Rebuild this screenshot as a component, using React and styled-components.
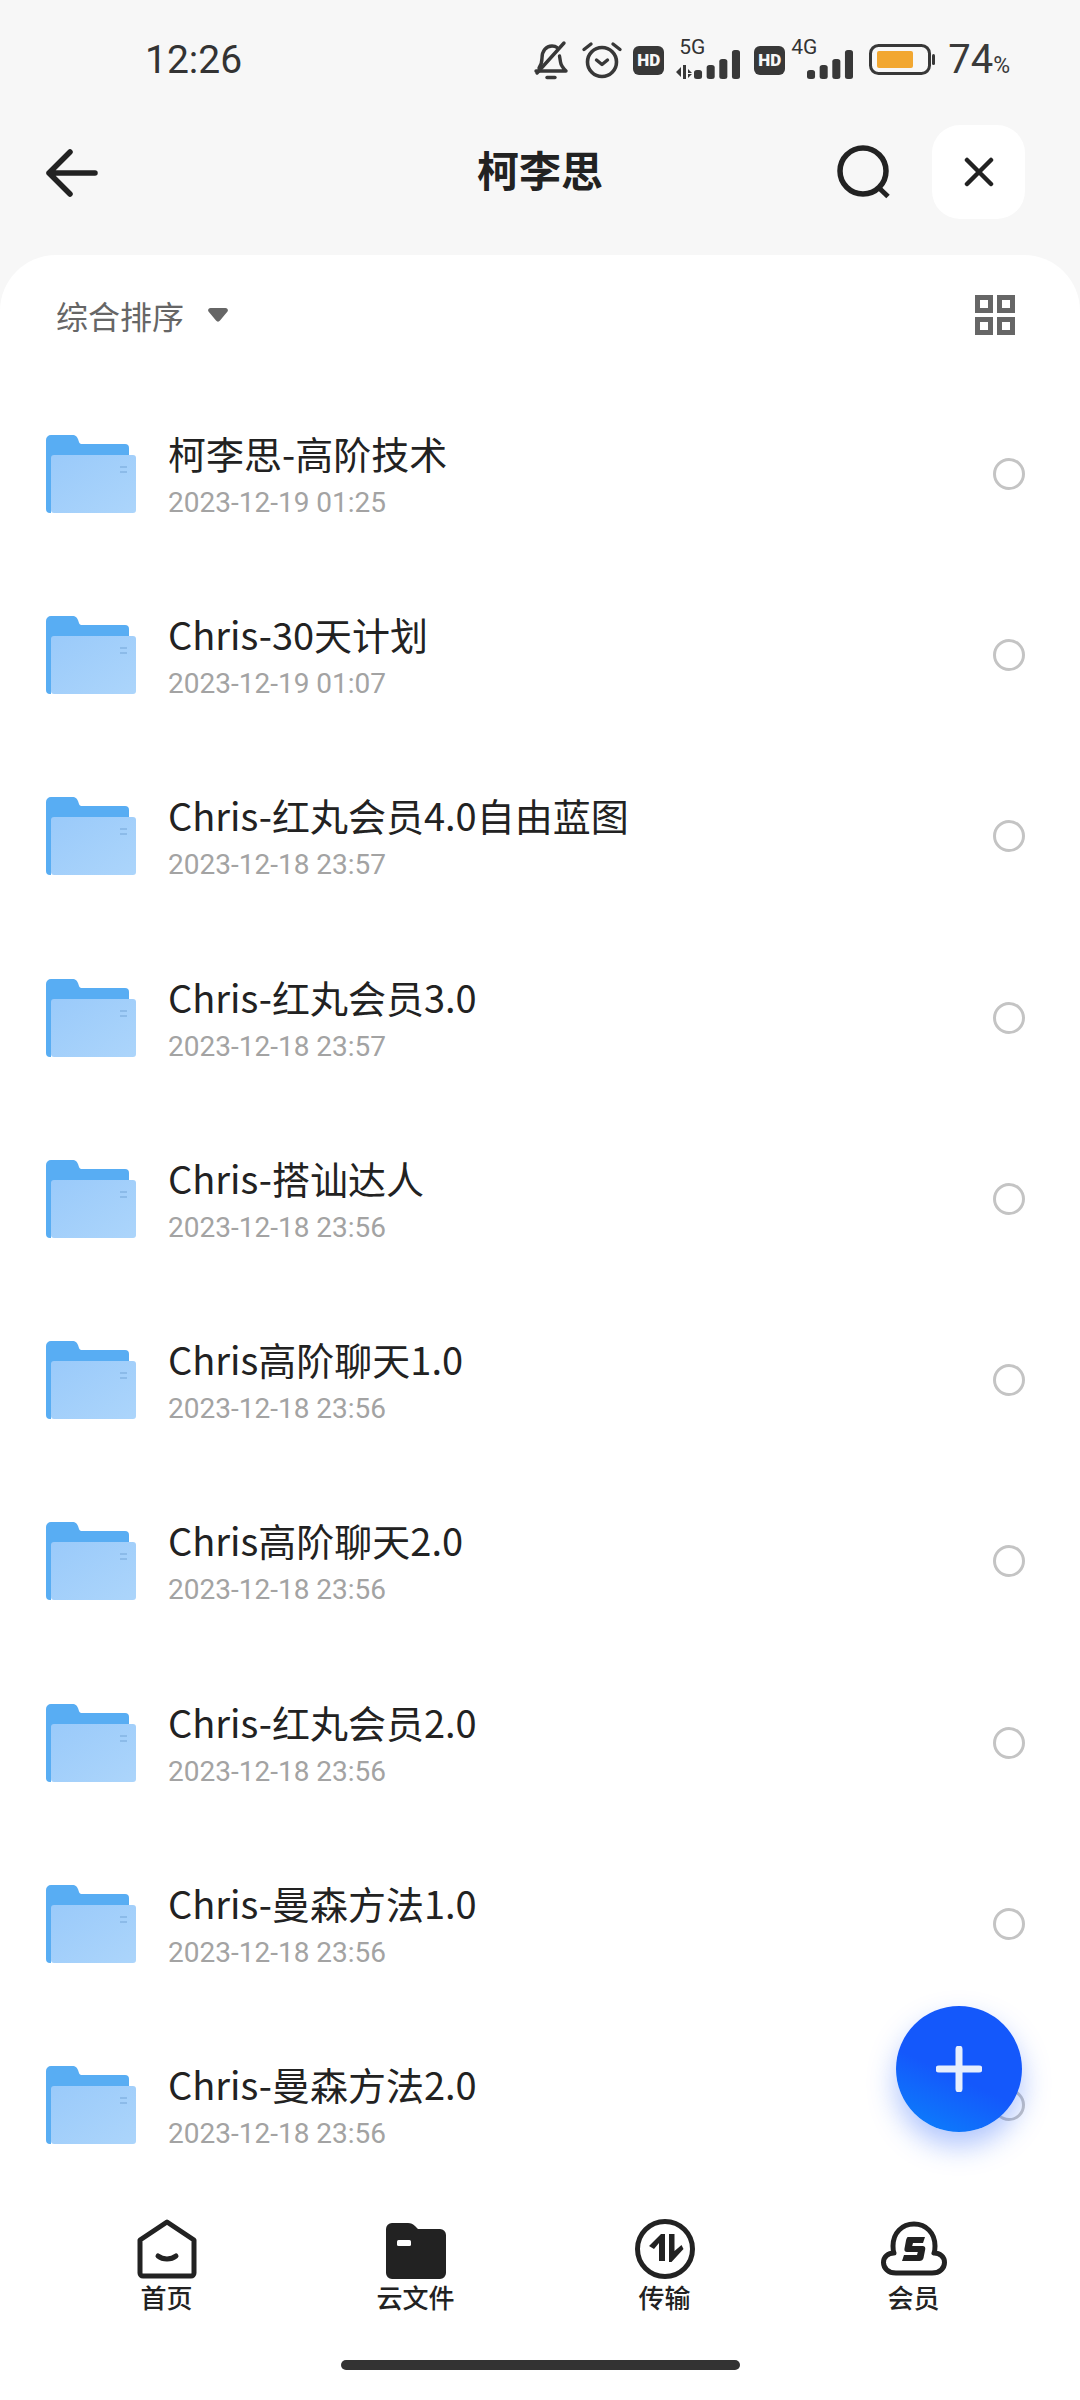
import React from 'react'
import styled, { createGlobalStyle } from 'styled-components'

const GlobalStyle = createGlobalStyle`
  html, body {
    margin: 0;
    padding: 0;
    background: #f7f7f7;
  }
  * {
    box-sizing: border-box;
  }
`

const FONT = `"Noto Sans CJK SC", "Noto Sans", sans-serif`
const LATIN = `Roboto, "Noto Sans CJK SC", sans-serif`

const Screen = styled.div`
  position: relative;
  width: 1080px;
  height: 2400px;
  display: flex;
  flex-direction: column;
  overflow: hidden;
  background: #f7f7f7;
  font-family: ${FONT};
`

const StatusBar = styled.div`
  height: 120px;
  flex: none;
  display: flex;
  align-items: center;
  justify-content: space-between;
  padding: 0 70px 0 145px;
  color: #333;
`

const Time = styled.div`
  font-family: ${LATIN};
  font-size: 39px;
  line-height: 1;
  color: #333;
`

const StatusIcons = styled.div`
  display: flex;
  align-items: center;
`

const HdBadge = styled.div`
  width: 31px;
  height: 29px;
  border-radius: 6px;
  background: #383838;
  color: #f7f7f7;
  font-family: ${LATIN};
  font-weight: 900;
  font-size: 17px;
  line-height: 29px;
  text-align: center;
  margin: ${(p) => p.$margin};
`

const Network = styled.div`
  position: relative;
  width: ${(p) => p.$width}px;
  height: 40px;
  margin-left: ${(p) => p.$left}px;
`

const NetworkLabel = styled.span`
  position: absolute;
  left: ${(p) => p.$x}px;
  top: -3px;
  font-family: ${LATIN};
  font-size: 21px;
  line-height: 1;
  color: #333;
`

const NetworkBars = styled.svg`
  position: absolute;
  right: 0;
  bottom: 0;
`

const Percent = styled.div`
  font-family: ${LATIN};
  font-size: 40px;
  line-height: 1;
  color: #3a3a3a;
  margin-left: 13px;
  display: flex;
  align-items: flex-end;
`

const PercentSign = styled.span`
  font-size: 23px;
  line-height: 1.2;
`

const Header = styled.div`
  height: 135px;
  flex: none;
  display: flex;
  align-items: flex-start;
  padding: 5px 55px 0 46px;
  position: relative;
`

const Title = styled.div`
  position: absolute;
  left: 0;
  right: 0;
  top: 20px;
  text-align: center;
  font-size: 42px;
  line-height: 58px;
  font-weight: 700;
  color: #222;
`

const HeaderIcon = styled.svg`
  display: block;
  margin-top: ${(p) => p.$top}px;
`

const HeaderActions = styled.div`
  margin-left: auto;
  display: flex;
  align-items: center;
  gap: 41px;
`

const CloseButton = styled.div`
  width: 93px;
  height: 94px;
  border-radius: 28px;
  background: #fff;
  display: flex;
  align-items: center;
  justify-content: center;
`

const Sheet = styled.div`
  flex: 1;
  min-height: 0;
  background: #fff;
  border-radius: 56px 56px 0 0;
  display: flex;
  flex-direction: column;
`

const SortBar = styled.div`
  height: 128px;
  flex: none;
  display: flex;
  align-items: center;
  padding: 0 65px 8px 56px;
`

const SortLabel = styled.div`
  font-size: 32px;
  line-height: 44px;
  color: #666;
`

const SortCaret = styled.svg`
  margin-left: 24px;
`

const GridToggle = styled.svg`
  margin-left: auto;
`

const List = styled.div`
  flex: 1;
  min-height: 0;
  overflow: hidden;
`

const Row = styled.div`
  height: 181.3px;
  display: flex;
  align-items: center;
  padding: 0 55px 0 46px;
`

const RowText = styled.div`
  margin-left: 32px;
  flex: 1;
  min-width: 0;
`

const RowTitle = styled.div`
  font-size: 38px;
  line-height: 50px;
  color: #222;
`

const RowDate = styled.div`
  font-family: ${LATIN};
  font-size: 28px;
  line-height: 34px;
  margin-top: 8px;
  color: #a3a3a3;
`

const Radio = styled.div`
  width: 32px;
  height: 32px;
  border-radius: 50%;
  border: 3px solid #c4c4c4;
`

const Fab = styled.div`
  position: absolute;
  left: 896px;
  top: 2006px;
  width: 126px;
  height: 126px;
  border-radius: 50%;
  background: linear-gradient(205deg, #1458fb 55%, #0b84fb 100%);
  box-shadow: 0 14px 28px rgba(30, 90, 250, 0.35);
  display: flex;
  align-items: center;
  justify-content: center;
`

const TabBar = styled.div`
  height: 170px;
  flex: none;
  background: #fff;
  display: grid;
  grid-template-columns: repeat(4, 249px);
  padding: 0 42px;
`

const Tab = styled.div`
  display: flex;
  flex-direction: column;
  align-items: center;
  padding-top: 29px;
`

const TabIcon = styled.svg`
  display: block;
`

const TabLabel = styled.div`
  font-size: 26px;
  line-height: 30px;
  font-weight: 500;
  color: #222;
  margin-top: 3px;
`

const HomeBar = styled.div`
  height: 40px;
  flex: none;
  background: #fff;
  display: flex;
  justify-content: center;
`

const HomeIndicator = styled.div`
  width: 399px;
  height: 10px;
  border-radius: 5px;
  background: #333;
`

const files = [
  ['柯李思-高阶技术', '2023-12-19 01:25'],
  ['Chris-30天计划', '2023-12-19 01:07'],
  ['Chris-红丸会员4.0自由蓝图', '2023-12-18 23:57'],
  ['Chris-红丸会员3.0', '2023-12-18 23:57'],
  ['Chris-搭讪达人', '2023-12-18 23:56'],
  ['Chris高阶聊天1.0', '2023-12-18 23:56'],
  ['Chris高阶聊天2.0', '2023-12-18 23:56'],
  ['Chris-红丸会员2.0', '2023-12-18 23:56'],
  ['Chris-曼森方法1.0', '2023-12-18 23:56'],
  ['Chris-曼森方法2.0', '2023-12-18 23:56'],
]

const BellOff = () => (
  <svg width="36" height="40" viewBox="0 0 36 40" fill="none" stroke="#383838" strokeWidth="3.4" strokeLinecap="round" strokeLinejoin="round">
    <path d="M3 31h30c-3-3-5-5-5.500-9l-1-6" />
    <path d="M6 28c2-3 3-6 3-10 0-7 4-12 10-12 2 0 4 .6 5 1.500" />
    <path d="M4 33 31 3" />
    <path d="M14 37.500h8" />
  </svg>
)

const Alarm = () => (
  <svg width="42" height="40" viewBox="0 0 42 40" fill="none" stroke="#383838" strokeLinecap="round" strokeLinejoin="round">
    <circle cx="21" cy="22" r="14.500" strokeWidth="3.600" />
    <path d="M15.500 20l5.500 4.500 5.500-4.500" strokeWidth="3.400" />
    <path d="M3 9.500 10 4M39 9.500 32 4" strokeWidth="3.400" />
  </svg>
)

const Bars = () => (
  <>
    <rect x="0" y="20" width="7" height="9" rx="2.500" />
    <rect x="11" y="15" width="7" height="14" rx="2.500" />
    <rect x="22" y="9" width="7" height="20" rx="2.500" />
    <rect x="33" y="0" width="7" height="29" rx="2.500" />
  </>
)

const Signal5G = () => (
  <NetworkBars width="66" height="30" viewBox="0 0 66 30" fill="#383838">
    <path d="M0 22l5-5v10zM7 15h3v14H7zM12 19l4 4h-4zM12 24h4l-4 4z" />
    <g transform="translate(18 0) scale(1.15 1)">
      <Bars />
    </g>
  </NetworkBars>
)

const Signal4G = () => (
  <NetworkBars width="48" height="30" viewBox="0 0 48 30" fill="#383838">
    <g transform="scale(1.15 1)">
      <Bars />
    </g>
  </NetworkBars>
)

const Battery = () => (
  <svg width="66" height="32" viewBox="0 0 66 32" fill="none" style={{ marginLeft: 14 }}>
    <rect x="1.500" y="1.500" width="59" height="28" rx="8" stroke="#383838" strokeWidth="3" fill="#f7f7f7" />
    <rect x="8" y="7" width="36" height="17" fill="#f2a730" rx="2" />
    <rect x="63" y="10" width="3" height="11" rx="1.500" fill="#383838" />
  </svg>
)

const FolderIcon = () => (
  <svg width="90" height="78" viewBox="0 0 90 78" style={{ flex: 'none' }}>
    <defs>
      <linearGradient id="folderFront" x1="0" y1="0" x2="1" y2="1">
        <stop offset="0" stopColor="#9acafa" />
        <stop offset="1" stopColor="#acd5fb" />
      </linearGradient>
    </defs>
    <path d="M0 5a5 5 0 0 1 5-5h21c4 0 5 2 6 4l1 3c.5 1.500 1.500 2 3 2h43a4 4 0 0 1 4 4v50H5v15H4a4 4 0 0 1-4-4z" fill="#58adf3" />
    <rect x="5" y="20" width="85" height="58" rx="3" fill="url(#folderFront)" />
    <path d="M74 32h7M74 37h7" stroke="#84b4e4" strokeWidth="1.600" />
  </svg>
)

const HomeIcon = () => (
  <TabIcon width="60" height="60" viewBox="0 0 60 60" fill="none" stroke="#222" strokeLinejoin="round" strokeLinecap="round">
    <path d="M30 3 57 21v33a3 3 0 0 1-3 3H6a3 3 0 0 1-3-3V21z" strokeWidth="5" />
    <path d="M21 37c5 4 13 4 18 0" strokeWidth="5" />
  </TabIcon>
)

const FilesIcon = () => (
  <TabIcon width="60" height="60" viewBox="0 0 60 60">
    <path d="M0 10a6 6 0 0 1 6-6h16c3 0 5 1 7 3l3 3h22a6 6 0 0 1 6 6v38a6 6 0 0 1-6 6H6a6 6 0 0 1-6-6z" fill="#222" />
    <rect x="11" y="21" width="14" height="6" rx="1.500" fill="#fff" />
  </TabIcon>
)

const TransferIcon = () => (
  <TabIcon width="60" height="60" viewBox="0 0 60 60" fill="none">
    <circle cx="30" cy="30" r="27.500" stroke="#222" strokeWidth="5" />
    <path d="M14 27l12-12h4v27h-6V24l-5 6z" fill="#222" />
    <path d="M34 15h5.500v17l7-6 2 4-12 13h-2.500z" fill="#222" />
  </TabIcon>
)

const MemberIcon = () => (
  <TabIcon width="66" height="60" viewBox="0 0 66 60" fill="none">
    <path d="M15 54C7 54 2.500 49 2.500 43.500 2.500 38 7 34 13 34c-1-2-1-5-1-7C12 14 21 5 33 5s21 9 21 22c0 2 0 5-1 7 6 0 10.500 4 10.500 9.500C63.500 49 59 54 51 54z" stroke="#222" strokeWidth="5" strokeLinejoin="round" />
    <path d="M27 18h17l-2 6H32l-.8 3h10.500c2 0 3 1.500 2.500 3.500L42.500 39c-.5 2-2 3-4 3H21l2-6h13l.8-3H26c-2 0-3-1.500-2.500-3.500l1.500-8c.4-1.500 1-3.500 2-3.500z" fill="#222" />
  </TabIcon>
)

const App = () => (
  <Screen>
    <GlobalStyle />
    <StatusBar>
      <Time>12:26</Time>
      <StatusIcons>
        <BellOff />
        <span style={{ width: 12 }} />
        <Alarm />
        <HdBadge $margin="0 0 0 10px">HD</HdBadge>
        <Network $width="66" $left="12">
          <NetworkLabel $x="3">5G</NetworkLabel>
          <Signal5G />
        </Network>
        <HdBadge $margin="0 0 0 12px">HD</HdBadge>
        <Network $width="64" $left="6">
          <NetworkLabel $x="0">4G</NetworkLabel>
          <Signal4G />
        </Network>
        <Battery />
        <Percent>74<PercentSign>%</PercentSign></Percent>
      </StatusIcons>
    </StatusBar>
    <Header>
      <HeaderIcon $top={24} width="52" height="48" viewBox="0 0 52 48" fill="none" stroke="#222" strokeWidth="5.500" strokeLinecap="round" strokeLinejoin="round">
        <path d="M24 3 3 24l21 21M3 24h46" />
      </HeaderIcon>
      <Title>柯李思</Title>
      <HeaderActions>
        <svg width="54" height="54" viewBox="0 0 54 54" fill="none" stroke="#222">
          <circle cx="26" cy="26" r="23" strokeWidth="5.500" />
          <path d="M41 42l10 9.500" strokeWidth="5" />
        </svg>
        <CloseButton>
          <svg width="30" height="30" viewBox="0 0 30 30" stroke="#222" strokeWidth="4.500" strokeLinecap="round">
            <path d="M3 3l24 24M27 3 3 27" />
          </svg>
        </CloseButton>
      </HeaderActions>
    </Header>
    <Sheet>
      <SortBar>
        <SortLabel>综合排序</SortLabel>
        <SortCaret width="20" height="14" viewBox="0 0 20 14" fill="#666">
          <path d="M2.500 0h15c2 0 3 2 2 3.500l-7.500 9c-1 1.500-3 1.500-4 0L.5 3.500C-.5 2 .5 0 2.500 0z" />
        </SortCaret>
        <GridToggle width="40" height="40" viewBox="0 0 40 40" fill="none" stroke="#666" strokeWidth="5">
          <rect x="2.500" y="2.500" width="13" height="13" />
          <rect x="24.500" y="2.500" width="13" height="13" />
          <rect x="2.500" y="24.500" width="13" height="13" />
          <rect x="24.500" y="24.500" width="13" height="13" />
        </GridToggle>
      </SortBar>
      <List>
        {files.map(([name, date]) => (
          <Row key={name}>
            <FolderIcon />
            <RowText>
              <RowTitle>{name}</RowTitle>
              <RowDate>{date}</RowDate>
            </RowText>
            <Radio />
          </Row>
        ))}
      </List>
      <TabBar>
        <Tab><HomeIcon /><TabLabel>首页</TabLabel></Tab>
        <Tab><FilesIcon /><TabLabel>云文件</TabLabel></Tab>
        <Tab><TransferIcon /><TabLabel>传输</TabLabel></Tab>
        <Tab><MemberIcon /><TabLabel>会员</TabLabel></Tab>
      </TabBar>
      <HomeBar><HomeIndicator /></HomeBar>
    </Sheet>
    <Fab>
      <svg width="46" height="46" viewBox="0 0 46 46" stroke="#e6eefc" strokeWidth="7" strokeLinecap="round">
        <path d="M23 3v40M3 23h40" />
      </svg>
    </Fab>
  </Screen>
)

export default App
